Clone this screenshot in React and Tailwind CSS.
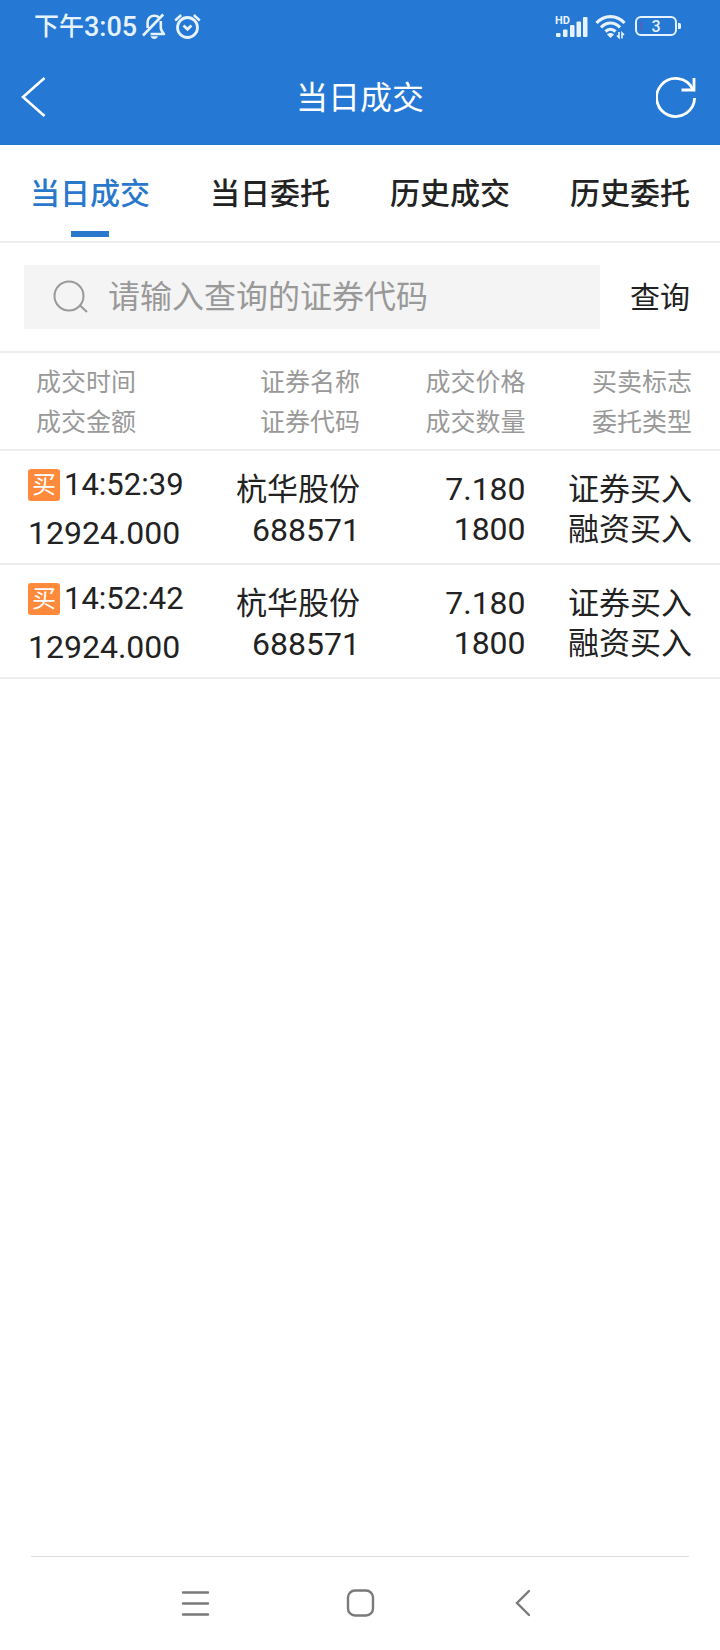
// src/pages/TodayDeals.jsx
import React from 'react';

const TABS = ['当日成交', '当日委托', '历史成交', '历史委托'];

const COLUMNS = [
  ['成交时间', '成交金额'],
  ['证券名称', '证券代码'],
  ['成交价格', '成交数量'],
  ['买卖标志', '委托类型'],
];

const DEALS = [
  {
    time: '14:52:39',
    amount: '12924.000',
    name: '杭华股份',
    code: '688571',
    price: '7.180',
    volume: '1800',
    flag: '证券买入',
    type: '融资买入',
  },
  {
    time: '14:52:42',
    amount: '12924.000',
    name: '杭华股份',
    code: '688571',
    price: '7.180',
    volume: '1800',
    flag: '证券买入',
    type: '融资买入',
  },
];

function StatusBar() {
  return (
    <div className="flex h-[54px] items-center justify-between pl-[34px] pr-[38px] text-[#e6f3ff]">
      <div className="flex items-center">
        <span className="text-[25px] font-medium leading-8">下午</span>
        <span className="text-[27px] font-medium leading-8">3:05</span>
        {/* muted bell */}
        <svg className="ml-1 h-7 w-7" viewBox="0 0 28 28" fill="none" stroke="currentColor" strokeWidth="2.6">
          <path d="M18 4.5C16.800 3.300 15 2.700 13.300 2.700C9.300 2.700 6.600 5.500 6.600 9.300V15" />
          <path d="M19.800 8V15C19.800 17.100 21 18.700 23 21H9.500" strokeLinejoin="round" />
          <path d="M22.200 1.500L2 22.500" />
          <path d="M9.500 23.300H17C16.200 25.300 15 26 13.300 26C11.600 26 10.300 25.300 9.500 23.300Z" fill="currentColor" stroke="none" />
        </svg>
        {/* alarm */}
        <svg className="ml-1 h-7 w-7" viewBox="0 0 28 28" fill="none" stroke="currentColor" strokeWidth="2.800">
          <circle cx="14.500" cy="14.500" r="10" />
          <path d="M2.200 7.500L8.200 2M20.800 2L26.800 7.500" strokeWidth="2.400" />
          <path d="M10.500 12.500L14.500 16.300L18.500 12.500" />
        </svg>
      </div>

      <div className="flex items-center">
        {/* signal */}
        <svg className="h-7 w-9" viewBox="0 0 36 28" fill="currentColor">
          <text x="0" y="11" fontSize="11" fontWeight="700">HD</text>
          <rect x="1" y="20" width="4.500" height="4" rx="1" />
          <rect x="8" y="16.500" width="4.500" height="7.500" rx="1" />
          <rect x="15" y="12" width="4.500" height="12" rx="1" />
          <rect x="21.500" y="8.500" width="4.500" height="15.500" rx="1" />
          <rect x="28" y="4" width="4.500" height="20" rx="1" />
        </svg>
        {/* wifi */}
        <svg className="ml-1 h-7 w-8" viewBox="0 0 32 28" fill="none" stroke="currentColor" strokeWidth="3.200">
          <path d="M1.500 10C9.500 1.500 21.500 1.500 29.500 10" />
          <path d="M6 14.500C11.500 8.500 19.500 8.500 25 14.500" />
          <path d="M10.500 18.500C13.500 15.500 17.500 15.500 20.500 18.500" />
          <path d="M12 21.500C14 19.500 17 19.500 19 21.500L15.500 25Z" fill="currentColor" stroke="none" />
          <path d="M24 19V24.500L22 22.500M27 25.500V20L29 22" strokeWidth="1.600" />
        </svg>
        {/* battery */}
        <svg className="ml-2 h-7 w-[47px]" viewBox="0 0 47 28" fill="none" stroke="currentColor">
          <rect x="1" y="4" width="40" height="18" rx="5" strokeWidth="2" />
          <path d="M6 8.500V17.500" stroke="#8a4a9e" strokeWidth="1" />
          <path d="M43 10H44.500Q46 10 46 11.500V14.500Q46 16 44.500 16H43Z" fill="currentColor" stroke="none" />
          <text x="21" y="19" textAnchor="middle" fontSize="16" fontWeight="500" fill="currentColor" stroke="none">
            3
          </text>
        </svg>
      </div>
    </div>
  );
}

function TitleBar() {
  return (
    <div className="flex h-[91px] items-center justify-between px-5 pb-1 text-white">
      <button type="button" aria-label="返回">
        <svg className="h-11 w-11" viewBox="0 0 44 44" fill="none" stroke="currentColor" strokeWidth="2.600">
          <path d="M24.500 2L3 21L24.500 40" />
        </svg>
      </button>
      <h1 className="text-[32px] leading-10">当日成交</h1>
      <button type="button" aria-label="刷新">
        <svg className="h-11 w-11" viewBox="0 0 44 44" fill="none" stroke="currentColor" strokeWidth="2.800">
          <path d="M38.600 22A19 19 0 1 1 36.600 13" />
          <path d="M38 2V14H25.500" />
        </svg>
      </button>
    </div>
  );
}

function Deal({ deal }) {
  return (
    <tr className="border-b-2 border-[#ececec] align-top">
      <td className="pb-[6px] pl-7 pt-[10px] leading-[48px]">
        <div className="flex h-12 items-center gap-1 text-[31px]">
          <span className="flex size-8 items-center justify-center rounded-[3px] bg-[#ff8a3c] text-[24px] text-white">
            买
          </span>
          {deal.time}
        </div>
        <div className="h-12">{deal.amount}</div>
      </td>
      <td className="pt-[19px] text-right leading-10">
        <div className="h-10 text-[31px]">{deal.name}</div>
        <div className="h-10">{deal.code}</div>
      </td>
      <td className="pt-[18px] text-right leading-10">
        <div className="h-10">{deal.price}</div>
        <div className="h-10">{deal.volume}</div>
      </td>
      <td className="pr-7 pt-[19px] text-right text-[31px] leading-10">
        <div className="h-10">{deal.flag}</div>
        <div className="h-10">{deal.type}</div>
      </td>
    </tr>
  );
}

export default function App() {
  const [tab, setTab] = React.useState(TABS[0]);
  const [keyword, setKeyword] = React.useState('');

  return (
    <div className="flex min-h-screen flex-col bg-white font-[Roboto,'Noto_Sans_CJK_SC',sans-serif] text-[#222222]">
      <header className="bg-[#2579d5]">
        <StatusBar />
        <TitleBar />
      </header>

      {/* tabs */}
      <nav className="grid grid-cols-4 border-b-2 border-[#ececec]">
        {TABS.map((t) => (
          <button
            key={t}
            type="button"
            onClick={() => setTab(t)}
            className={`flex h-24 flex-col items-center pt-[29px] text-[30px] font-medium leading-10 ${t === tab ? 'text-[#2a78cc]' : ''}`}
          >
            {t}
            {t === tab && <span className="mt-[17px] h-[6px] w-[38px] bg-[#2a78cc]" />}
          </button>
        ))}
      </nav>

      {/* search */}
      <form
        onSubmit={(e) => e.preventDefault()}
        className="flex items-center border-b-2 border-[#ececec] py-[22px] pl-6"
      >
        <label className="flex h-16 min-w-0 flex-1 items-center bg-[#f4f4f4] pl-7">
          <svg className="h-9 w-9 shrink-0" viewBox="0 0 36 36" fill="none" stroke="#999999" strokeWidth="2">
            <circle cx="17" cy="17" r="14.500" />
            <path d="M28 26.500L35 33" />
          </svg>
          <input
            type="text"
            aria-label="证券代码"
            placeholder="请输入查询的证券代码"
            value={keyword}
            onChange={(e) => setKeyword(e.target.value)}
            className="ml-5 min-w-0 flex-1 text-[32px] leading-10 outline-none placeholder:text-[#999999]"
          />
        </label>
        <button type="submit" className="w-[120px] pt-[2px] text-[30px] leading-10">
          查询
        </button>
      </form>

      {/* deals */}
      <main className="flex-1">
        <table className="w-full table-fixed text-[32px]">
          <thead>
            <tr className="border-b-2 border-[#ececec] text-[25px] leading-10 text-[#999999]">
              {COLUMNS.map(([first, second], i) => (
                <th
                  key={first}
                  scope="col"
                  className={`pb-[6px] pt-[10px] font-normal ${
                    i === 0 ? 'w-[27%] pl-9 text-left' : i === 3 ? 'w-[27%] pr-7 text-right' : 'w-[23%] text-right'
                  }`}
                >
                  <div className="h-10">{first}</div>
                  <div className="h-10">{second}</div>
                </th>
              ))}
            </tr>
          </thead>
          <tbody>
            {DEALS.map((deal) => (
              <Deal key={deal.time} deal={deal} />
            ))}
          </tbody>
        </table>
      </main>

      {/* system navigation */}
      <footer className="mx-[31px] flex h-[94px] items-center justify-center gap-[129px] border-t border-[#dddddd] text-[#7a7a7a]">
        <button type="button" aria-label="最近任务">
          <svg className="h-9 w-9" viewBox="0 0 36 36" fill="none" stroke="currentColor" strokeWidth="2.400" strokeLinecap="round">
            <path d="M6 6.500H31M6 17.500H31M6 28.500H31" />
          </svg>
        </button>
        <button type="button" aria-label="主页">
          <svg className="h-9 w-9" viewBox="0 0 36 36" fill="none" stroke="currentColor" strokeWidth="2.400">
            <rect x="6" y="4.500" width="25" height="25" rx="7" />
          </svg>
        </button>
        <button type="button" aria-label="后退">
          <svg className="h-9 w-9" viewBox="0 0 36 36" fill="none" stroke="currentColor" strokeWidth="2.400" strokeLinecap="round">
            <path d="M22 5L10 17L22 29" />
          </svg>
        </button>
      </footer>
    </div>
  );
}
